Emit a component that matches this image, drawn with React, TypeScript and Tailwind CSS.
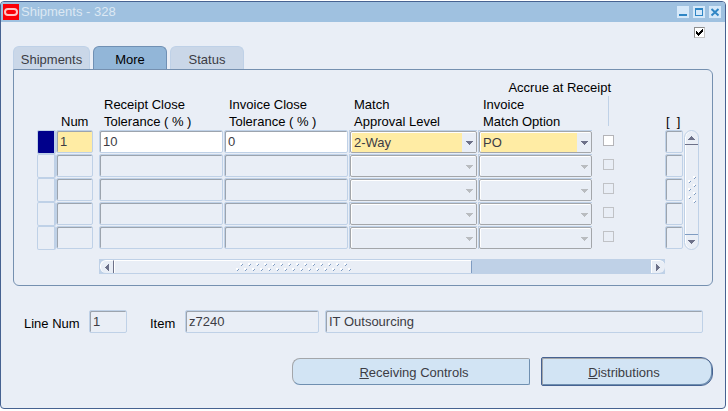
import { useState } from "react";
import type { InputHTMLAttributes } from "react";
import clsx from "clsx";

interface ShipmentRow {
  num: string;
  receiptTolerance: string;
  invoiceTolerance: string;
  approvalLevel: string;
  matchOption: string;
}

const emptyRow: ShipmentRow = { num: "", receiptTolerance: "", invoiceTolerance: "", approvalLevel: "", matchOption: "" };

const rows: ShipmentRow[] = [
  { num: "1", receiptTolerance: "10", invoiceTolerance: "0", approvalLevel: "2-Way", matchOption: "PO" },
  emptyRow,
  emptyRow,
  emptyRow,
  emptyRow,
];

const tabs = ["Shipments", "More", "Status"];

function Field({ className, ...props }: InputHTMLAttributes<HTMLInputElement>) {
  return (
    <input
      type="text"
      className={clsx(
        "block h-[23px] min-w-0 rounded-xs border border-[#bfd1e7] pl-[3px] text-[#3c3c44] shadow-[inset_1px_1px_0_#9ca4ae] outline-none",
        className
      )}
      {...props}
    />
  );
}

function SelectField({ label, value, options, active }: { label: string; value: string; options: string[]; active: boolean }) {
  return (
    <div className="h-[23px] border-l border-t border-[#bfd1e7]">
      <div className="grid h-[22px] rounded-xs border border-[#a3a6aa] pl-px pt-px shadow-[inset_1px_1px_0_#ffffff]">
        <select
          aria-label={label}
          defaultValue={value}
          disabled={!active}
          className={clsx(
            "col-start-1 row-start-1 h-[19px] w-full min-w-0 appearance-none pl-0.5 text-[#3c3c44] outline-none",
            active ? "bg-[#ffeca4]" : "bg-[#e9eef6]"
          )}
        >
          {options.map((option) => (
            <option key={option}>{option}</option>
          ))}
        </select>
        <span className="pointer-events-none col-start-1 row-start-1 flex h-[19px] w-[14px] items-center justify-self-end bg-[#e9eef6] pl-1">
          <svg width="7" height="4" viewBox="0 0 7 4" shapeRendering="crispEdges" className={active ? "text-[#6d7189]" : "text-[#b9bcc0]"}>
            <path d="M0 0h7v1H6v1H5v1H4v1H3V3H2V2H1V1H0z" fill="currentColor" />
          </svg>
        </span>
      </div>
    </div>
  );
}

function Grip({ vertical }: { vertical?: boolean }) {
  const count = vertical ? 4 : 15;
  const dots = Array.from({ length: count }, (_, i) => i);
  const width = vertical ? 8 : 115;
  const height = vertical ? 27 : 8;

  return (
    <svg width={width} height={height} viewBox={`0 0 ${width} ${height}`} shapeRendering="crispEdges" className="shrink-0">
      {dots.flatMap((i) => {
        const spots = vertical
          ? [
              [0, i * 8 + 4],
              [5, i * 8],
            ]
          : [
              [i * 8, 5],
              [i * 8 + 4, 0],
            ];
        return spots
          .filter(([x, y]) => x + 3 <= width && y + 3 <= height)
          .map(([x, y]) => (
            <g key={`${x}-${y}`}>
              <path d={`M${x} ${y}h2v2h-2z`} fill="#ffffff" />
              <path d={`M${x + 2} ${y + 1}h1v1h-1zM${x + 1} ${y + 2}h1v1h-1z`} fill="#7f9cc2" />
            </g>
          ));
      })}
    </svg>
  );
}

function OracleLogo() {
  return (
    <svg width="16" height="16" viewBox="0 0 16 16" className="shrink-0">
      <rect width="16" height="16" fill="#fb0007" />
      <rect x="2" y="5" width="12" height="6" rx="3" fill="none" stroke="#ffc4c4" strokeWidth="2" />
    </svg>
  );
}

function TitleBar() {
  const buttonClass = "h-3 w-3 bg-[#d5e8f9] text-[#2f86c5]";

  return (
    <header className="flex h-5 items-center bg-[#9fc1e0] pl-0.5 pr-1">
      <OracleLogo />
      <h1 className="flex-1 pl-0.5 text-[#dce8f3]">Shipments - 328</h1>
      <div className="flex gap-1">
        <button type="button" aria-label="Minimize" className={buttonClass}>
          <svg width="12" height="12" viewBox="0 0 12 12" shapeRendering="crispEdges">
            <path d="M2 8h8v2H2z" fill="currentColor" />
          </svg>
        </button>
        <button type="button" aria-label="Maximize" className={buttonClass}>
          <svg width="12" height="12" viewBox="0 0 12 12" shapeRendering="crispEdges">
            <path d="M2 2h8v8H2zM3 4v5h6V4z" fill="currentColor" fillRule="evenodd" />
          </svg>
        </button>
        <button type="button" aria-label="Close" className={buttonClass}>
          <svg width="12" height="12" viewBox="0 0 12 12">
            <path d="M2.5 3l7 6.5M9.5 3l-7 6.5" stroke="currentColor" strokeWidth="2" />
          </svg>
        </button>
      </div>
    </header>
  );
}

function HorizontalScroll() {
  return (
    <div className="ml-[62px] mr-[18px] mt-[9px] flex h-[15px] border-y border-l border-[#bfd1e7] bg-[#bfd1e7]">
      <button type="button" aria-label="Scroll left" className="flex w-[14px] items-center justify-end rounded-l-md border-l border-t border-white border-r border-r-[#6d7189] bg-[#e9eef6] pr-1">
        <svg width="4" height="7" viewBox="0 0 4 7" shapeRendering="crispEdges">
          <path d="M4 0v7H3V6H2V5H1V4H0V3h1V2h1V1h1V0z" fill="#6d7189" />
        </svg>
      </button>
      <div className="flex-1">
        <div className="flex h-[13px] w-2/3 items-center justify-center border-l border-t border-white border-r border-r-[#7f9cc2] bg-[#e9eef6]">
          <Grip />
        </div>
      </div>
      <button type="button" aria-label="Scroll right" className="flex w-[14px] items-center rounded-r-md border-l border-t border-white bg-[#e9eef6] pl-1">
        <svg width="4" height="7" viewBox="0 0 4 7" shapeRendering="crispEdges">
          <path d="M0 0v7h1V6h1V5h1V4h1V3H3V2H2V1H1V0z" fill="#6d7189" />
        </svg>
      </button>
    </div>
  );
}

function VerticalScroll() {
  return (
    <div className="ml-px mt-[50px] flex h-[120px] w-[15px] flex-col rounded-full border border-[#bfd1e7] shadow-[inset_1px_0_0_#ffffff]">
      <button type="button" aria-label="Scroll up" className="flex h-[14px] items-center justify-center border-b border-[#6d7189]">
        <svg width="7" height="4" viewBox="0 0 7 4" shapeRendering="crispEdges">
          <path d="M3 0h1v1h1v1h1v1h1v1H0V3h1V2h1V1h1z" fill="#6d7189" />
        </svg>
      </button>
      <div className="flex flex-1 items-center justify-center">
        <Grip vertical />
      </div>
      <button type="button" aria-label="Scroll down" className="flex h-[15px] items-center justify-center border-t border-[#7f9cc2]">
        <svg width="7" height="4" viewBox="0 0 7 4" shapeRendering="crispEdges">
          <path d="M0 0h7v1H6v1H5v1H4v1H3V3H2V2H1V1H0z" fill="#6d7189" />
        </svg>
      </button>
    </div>
  );
}

function ShipmentTable() {
  return (
    <table className="w-full table-fixed border-collapse">
      <colgroup>
        <col className="w-[19px]" />
        <col className="w-[43px]" />
        <col className="w-[125px]" />
        <col className="w-[125px]" />
        <col className="w-[129px]" />
        <col className="w-[114px]" />
        <col className="w-[22px]" />
        <col />
        <col className="w-[18px]" />
      </colgroup>
      <thead className="text-left align-bottom leading-[17px]">
        <tr>
          <td colSpan={5} />
          <th colSpan={2} className="h-4 whitespace-nowrap p-0 pr-[3px] text-right font-normal leading-4">
            Accrue at Receipt
          </th>
          <td colSpan={2} />
        </tr>
        <tr className="h-[34px]">
          <td />
          <th className="p-0 pl-[5px] align-bottom font-normal">Num</th>
          <th className="p-0 pl-[5px] font-normal">
            Receipt Close
            <br />
            Tolerance ( % )
          </th>
          <th className="p-0 pl-[5px] font-normal">
            Invoice Close
            <br />
            Tolerance ( % )
          </th>
          <th className="p-0 pl-[5px] font-normal">
            Match
            <br />
            Approval Level
          </th>
          <th className="p-0 pl-[5px] font-normal">
            Invoice
            <br />
            Match Option
          </th>
          <td className="p-0 align-top">
            <div className="ml-auto mr-[5px] h-[30px] w-px bg-[#bfd1e7]" />
          </td>
          <td />
          <th className="whitespace-pre p-0 pl-px align-bottom font-normal">[&nbsp; ]</th>
        </tr>
      </thead>
      <tbody>
        {rows.map((row, index) => {
          const active = index === 0;
          const line = index + 1;
          return (
            <tr key={index} className="h-6 align-top">
              <td className="p-0">
                <button
                  type="button"
                  aria-label={`Select row ${line}`}
                  className={clsx("block h-6 w-full rounded-xs border border-r-2 border-[#bfd1e7]", active && "bg-[#00008b]")}
                />
              </td>
              <td className="p-0 pr-1.5">
                <Field aria-label={`Num, row ${line}`} defaultValue={row.num} className={clsx("w-full", active && "bg-[#ffeca4]")} />
              </td>
              <td className="p-0 pr-px">
                <Field aria-label={`Receipt close tolerance, row ${line}`} defaultValue={row.receiptTolerance} className={clsx("w-full", active && "bg-white")} />
              </td>
              <td className="p-0 pr-px">
                <Field aria-label={`Invoice close tolerance, row ${line}`} defaultValue={row.invoiceTolerance} className={clsx("w-full", active && "bg-white")} />
              </td>
              <td className="p-0 pr-px">
                <SelectField label={`Match approval level, row ${line}`} value={row.approvalLevel} options={active ? ["2-Way", "3-Way", "4-Way"] : [""]} active={active} />
              </td>
              <td className="p-0">
                <SelectField label={`Invoice match option, row ${line}`} value={row.matchOption} options={active ? ["PO", "Receipt"] : [""]} active={active} />
              </td>
              <td className="p-0 pt-[5px]">
                <input
                  type="checkbox"
                  aria-label={`Accrue at receipt, row ${line}`}
                  disabled={!active}
                  className={clsx("ml-auto block h-[11px] w-[11px] appearance-none border", active ? "border-[#b4b4b8] bg-white" : "border-[#c0c2c6]")}
                />
              </td>
              <td />
              <td className="p-0">
                <Field aria-label={`Flexfield, row ${line}`} className="w-full" />
              </td>
            </tr>
          );
        })}
      </tbody>
    </table>
  );
}

export default function App() {
  const [activeTab, setActiveTab] = useState("More");
  const [checked, setChecked] = useState(true);

  return (
    <div className="flex min-h-screen flex-col bg-white pb-0.5 pr-0.5 pt-px font-['Liberation_Sans',Arial,sans-serif] text-[13px] leading-4 text-black">
      <main className="flex-1 overflow-hidden rounded-sm border border-[#466291] bg-[#e9eef6]">
        <TitleBar />

        <div className="flex h-6 justify-end pr-5 pt-[5px]">
          <label className="grid h-[11px] w-[11px]">
            <input
              type="checkbox"
              aria-label="Enabled"
              checked={checked}
              onChange={(e) => setChecked(e.target.checked)}
              className="col-start-1 row-start-1 h-[11px] w-[11px] appearance-none border border-[#c4c4c4] border-l-[#8e8e8e] border-t-[#8e8e8e] bg-white"
            />
            {checked && (
              <svg width="11" height="11" viewBox="0 0 11 11" shapeRendering="crispEdges" className="pointer-events-none col-start-1 row-start-1">
                <path d="M2 4h1v1h1v1h1V5h1V4h1V3h1V2h1v3H8v1H7v1H6v1H5v1H4V8H3V7H2z" fill="#000000" />
              </svg>
            )}
          </label>
        </div>

        {/* Tabs */}
        <div role="tablist" className="ml-3 flex gap-[3px]">
          {tabs.map((tab) => (
            <button
              key={tab}
              type="button"
              role="tab"
              aria-selected={tab === activeTab}
              onClick={() => setActiveTab(tab)}
              className={clsx(
                "h-[23px] rounded-t-md border border-b-0 pt-1",
                tab === "Shipments" ? "w-[77px]" : "w-[74px]",
                tab === activeTab ? "border-[#7090b4] bg-[#92b6d8] text-black" : "border-[#bfd1e7] bg-[#cad7e8] text-[#3c3c44]"
              )}
            >
              {tab}
            </button>
          ))}
        </div>

        {/* Tab page */}
        <section className="ml-3 mr-3 flex rounded-b-md rounded-tr-md border border-[#7590b0] pb-[11px] pl-[23px] pr-[13px] pt-2.5">
          <div className="min-w-0 flex-1">
            <ShipmentTable />
            <HorizontalScroll />
          </div>
          <VerticalScroll />
        </section>

        {/* Line details */}
        <div className="mt-6 flex items-center pl-[23px] pr-[22px]">
          <label htmlFor="line-num" className="w-[65px] pt-1">
            Line Num
          </label>
          <Field id="line-num" readOnly defaultValue="1" className="w-[38px]" />
          <label htmlFor="item" className="ml-[23px] w-[35px] pt-1">
            Item
          </label>
          <Field id="item" readOnly defaultValue="z7240" className="w-[134px]" />
          <Field aria-label="Item description" readOnly defaultValue="IT Outsourcing" className="ml-1.5 flex-1" />
        </div>

        <div className="mt-6 flex items-center justify-end gap-[11px] pb-5 pr-3">
          <button type="button" className="h-[27px] w-[238px] rounded-l-lg rounded-r-xs border border-[#a3a6aa] border-b-[#6f8fb0] border-r-[#6f8fb0] bg-[#d2e4f4] pl-1.5 pt-0.5 text-[#3c3c44]">
            <span className="underline">R</span>eceiving Controls
          </button>
          <button type="button" className="h-[29px] w-[172px] rounded-l-xs rounded-r-xl border border-[#466291] bg-[#d2e4f4] pr-1.5 pt-0.5 text-[#3c3c44] shadow-[inset_1px_1px_0_#a3a6aa,inset_-1px_-1px_0_#6f8fb0]">
            <span className="underline">D</span>istributions
          </button>
        </div>
      </main>
    </div>
  );
}
